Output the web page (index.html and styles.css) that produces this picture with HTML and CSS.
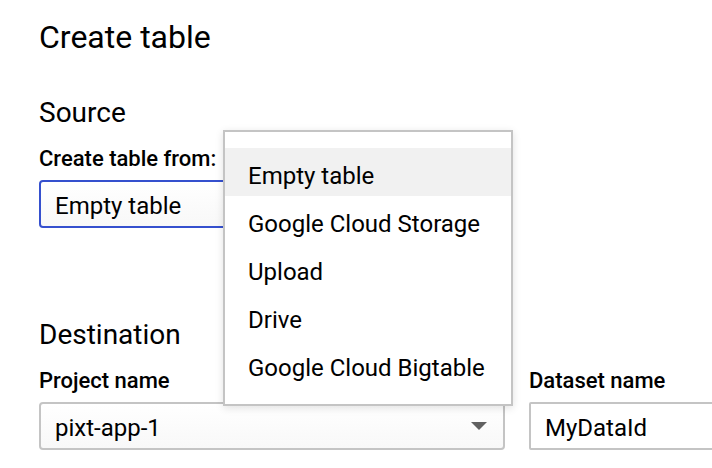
FILE: index.html
```html
<!DOCTYPE html>
<html lang="en">
<head>
<meta charset="utf-8">
<meta name="viewport" content="width=device-width, initial-scale=1">
<title>Create table</title>
<link rel="stylesheet" href="styles.css">
</head>
<body>
<main class="page">
  <h1 class="title">Create table</h1>
  <form class="form">
    <section class="section">
      <h2 class="heading">Source</h2>
      <div class="fields">
        <div class="field">
          <label class="label" for="source">Create table from:</label>
          <div class="control control-source">
            <select class="box select is-open" id="source">
              <option>Empty table</option>
            </select>
            <div class="menu" role="listbox" aria-label="Create table from">
              <button class="option is-selected" type="button" role="option" aria-selected="true">Empty table</button>
              <button class="option" type="button" role="option">Google Cloud Storage</button>
              <button class="option" type="button" role="option">Upload</button>
              <button class="option" type="button" role="option">Drive</button>
              <button class="option" type="button" role="option">Google Cloud Bigtable</button>
            </div>
          </div>
        </div>
      </div>
    </section>
    <section class="section">
      <h2 class="heading">Destination</h2>
      <div class="fields">
        <div class="field">
          <label class="label" for="project">Project name</label>
          <div class="control">
            <select class="box select" id="project">
              <option>pixt-app-1</option>
            </select>
            <svg class="arrow" viewBox="0 0 16 8" aria-hidden="true"><path d="M0 0h16L8 8z"/></svg>
          </div>
        </div>
        <div class="field">
          <label class="label" for="dataset">Dataset name</label>
          <div class="control">
            <input class="box" id="dataset" type="text" value="MyDataId">
          </div>
        </div>
      </div>
    </section>
  </form>
</main>
</body>
</html>
```
FILE: styles.css
```css
* {
  box-sizing: border-box;
}

body {
  margin: 0;
  background: #fff;
  color: #000;
  font-family: Roboto, "Liberation Sans", sans-serif;
  font-size: 24px;
}

.page {
  padding: 17px 0 18px 39px;
  overflow-x: clip;
}

.title {
  margin: 0 0 36px;
  font-size: 32px;
  line-height: 40px;
  font-weight: 400;
}

.form {
  display: flex;
  flex-direction: column;
  gap: 86px;
}

.heading {
  margin: 0 0 12px;
  font-size: 28px;
  line-height: 40px;
  font-weight: 400;
}

.fields {
  display: grid;
  grid-template-columns: repeat(2, minmax(466px, 1fr));
  gap: 24px;
}

.field {
  display: flex;
  flex-direction: column;
  gap: 7px;
}

.label {
  font-size: 22px;
  line-height: 28px;
  font-weight: 500;
}

.control {
  position: relative;
}

.control-source {
  width: 240px;
}

.box {
  display: block;
  width: 100%;
  height: 48px;
  margin: 0;
  padding: 3px 14px 0;
  border: 2px solid #c4c4c4;
  border-radius: 2px;
  background: #fff;
  color: inherit;
  font: inherit;
  outline: 0;
}

.select {
  appearance: none;
  border-radius: 4px;
  background: linear-gradient(#fff, #f8f8f8);
}

.is-open {
  border-color: #3550ce;
}

.arrow {
  position: absolute;
  top: 20px;
  right: 18px;
  width: 16px;
  height: 8px;
  fill: #616161;
  pointer-events: none;
}

.section + .section {
  margin-top: 1px;
}

.menu {
  position: absolute;
  top: -50px;
  left: 184px;
  z-index: 1;
  display: flex;
  flex-direction: column;
  min-width: 290px;
  padding: 16px 0;
  border: 2px solid #c4c4c4;
  background: #fff;
  box-shadow: 0 2px 8px rgba(0, 0, 0, 0.12);
}

.option {
  height: 48px;
  padding: 8px 23px 0;
  border: 0;
  background: none;
  color: inherit;
  font: inherit;
  text-align: left;
  white-space: nowrap;
}

.is-selected {
  background: #f1f1f1;
}
```
